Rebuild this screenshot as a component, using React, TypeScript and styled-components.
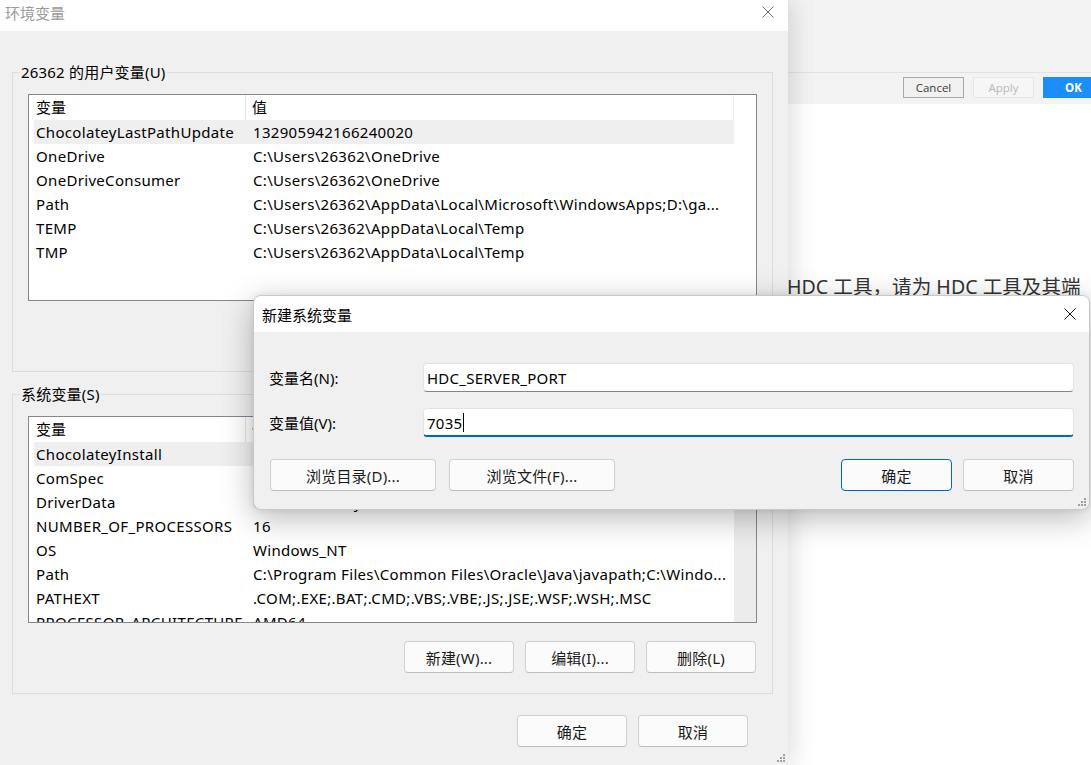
import React from 'react'
import styled, { createGlobalStyle } from 'styled-components'

const GlobalStyle = createGlobalStyle`
  html, body {
    margin: 0;
    padding: 0;
  }
  body {
    font-family: "Noto Sans", "Noto Sans CJK SC", sans-serif;
    background: #ffffff;
    color: #000;
  }
  * {
    box-sizing: border-box;
  }
`

type Pair = [string, string]

const userVars: Pair[] = [
  ['ChocolateyLastPathUpdate', '132905942166240020'],
  ['OneDrive', 'C:\\Users\\26362\\OneDrive'],
  ['OneDriveConsumer', 'C:\\Users\\26362\\OneDrive'],
  ['Path', 'C:\\Users\\26362\\AppData\\Local\\Microsoft\\WindowsApps;D:\\ga...'],
  ['TEMP', 'C:\\Users\\26362\\AppData\\Local\\Temp'],
  ['TMP', 'C:\\Users\\26362\\AppData\\Local\\Temp'],
]

const systemVars: Pair[] = [
  ['ChocolateyInstall', 'C:\\ProgramData\\chocolatey'],
  ['ComSpec', 'C:\\Windows\\system32\\cmd.exe'],
  ['DriverData', 'C:\\Windows\\System32\\Drivers\\DriverData'],
  ['NUMBER_OF_PROCESSORS', '16'],
  ['OS', 'Windows_NT'],
  ['Path', 'C:\\Program Files\\Common Files\\Oracle\\Java\\javapath;C:\\Windo...'],
  ['PATHEXT', '.COM;.EXE;.BAT;.CMD;.VBS;.VBE;.JS;.JSE;.WSF;.WSH;.MSC'],
  ['PROCESSOR_ARCHITECTURE', 'AMD64'],
]

function CloseIcon({ color = '#1a1a1a' }: { color?: string }) {
  return (
    <svg width='12' height='12' viewBox='0 0 12 12'>
      <path d='M0.5 0.5 L11.5 11.5 M11.5 0.5 L0.5 11.5' stroke={color} strokeWidth='1' fill='none' />
    </svg>
  )
}

function Grip() {
  return (
    <GripBox width='10' height='10' viewBox='0 0 10 10'>
      {[
        [8, 2],
        [5, 5],
        [8, 5],
        [2, 8],
        [5, 8],
        [8, 8],
      ].map(([x, y]) => (
        <rect key={`${x}-${y}`} x={x - 1} y={y - 1} width='2' height='2' fill='#a0a0a0' />
      ))}
    </GripBox>
  )
}

function VarList({ rows, scroll }: { rows: Pair[]; scroll?: boolean }) {
  return (
    <ListBox>
      <ListScroll>
        <ListHeader>
          <HeadCell>变量</HeadCell>
          <HeadCell $value>值</HeadCell>
        </ListHeader>
        {rows.map(([name, value], i) => (
          <Row key={name + i} $selected={i === 0}>
            <Cell>{name}</Cell>
            <Cell $value>{value}</Cell>
          </Row>
        ))}
      </ListScroll>
      <ScrollTrack $visible={scroll} />
    </ListBox>
  )
}

export default function App() {
  return (
    <Desktop>
      <GlobalStyle />
      <EnvWindow>
        <TitleBar>
          <WindowTitle>环境变量</WindowTitle>
          <CloseIcon color='#6b6b6b' />
        </TitleBar>
        <EnvBody>
          <Group>
            <Legend>26362 的用户变量(U)</Legend>
            <VarList rows={userVars} />
            <ButtonRow>
              <WinButton>新建(N)...</WinButton>
              <WinButton>编辑(E)...</WinButton>
              <WinButton>删除(D)</WinButton>
            </ButtonRow>
          </Group>
          <Group $second>
            <Legend>系统变量(S)</Legend>
            <VarList rows={systemVars} scroll />
            <ButtonRow>
              <WinButton>新建(W)...</WinButton>
              <WinButton>编辑(I)...</WinButton>
              <WinButton>删除(L)</WinButton>
            </ButtonRow>
          </Group>
          <FooterRow>
            <WinButton>确定</WinButton>
            <WinButton>取消</WinButton>
          </FooterRow>
        </EnvBody>
        <Grip />
      </EnvWindow>

      <BackWindow>
        <BackTop />
        <BackBar>
          <BarButton>Cancel</BarButton>
          <BarButton $variant='disabled'>Apply</BarButton>
          <BarButton $variant='primary'>OK</BarButton>
        </BackBar>
        <BackContent>
          <BackText>HDC 工具，请为 HDC 工具及其端口号配置环境变量。</BackText>
        </BackContent>
      </BackWindow>

      <Dialog>
        <DialogTitleBar>
          <DialogTitle>新建系统变量</DialogTitle>
          <CloseIcon />
        </DialogTitleBar>
        <DialogBody>
          <FormGrid>
            <FieldLabel>变量名(N):</FieldLabel>
            <Field>HDC_SERVER_PORT</Field>
            <FieldLabel>变量值(V):</FieldLabel>
            <Field $focused>
              7035
              <Caret />
            </Field>
          </FormGrid>
          <DialogButtons>
            <ButtonGroup $gap={13}>
              <WinButton $w={166}>浏览目录(D)...</WinButton>
              <WinButton $w={166}>浏览文件(F)...</WinButton>
            </ButtonGroup>
            <ButtonGroup $gap={11}>
              <WinButton $w={111} $primary>
                确定
              </WinButton>
              <WinButton $w={111}>取消</WinButton>
            </ButtonGroup>
          </DialogButtons>
        </DialogBody>
        <Grip />
      </Dialog>
    </Desktop>
  )
}

const Desktop = styled.div`
  position: relative;
  display: flex;
  width: 1091px;
  height: 765px;
  overflow: hidden;
  background: #ffffff;
`

const EnvWindow = styled.div`
  position: relative;
  z-index: 1;
  flex: 0 0 788px;
  display: flex;
  flex-direction: column;
  background: #f0f0f0;
  box-shadow: 2px 0 26px rgba(0, 0, 0, 0.16);
`

const TitleBar = styled.div`
  height: 31px;
  flex: 0 0 31px;
  display: flex;
  align-items: flex-start;
  justify-content: space-between;
  padding: 3px 14px 0 5px;
  background: #ffffff;

  svg {
    margin-top: 3px;
  }
`

const WindowTitle = styled.span`
  font-size: 15px;
  line-height: 20px;
  color: #9a9a9a;
`

const EnvBody = styled.div`
  display: flex;
  flex-direction: column;
  padding: 0 15px 0 12px;
`

const Group = styled.fieldset<{ $second?: boolean }>`
  margin: ${(p) => (p.$second ? '12px' : '31px')} 0 0;
  padding: 12px 15px 20px 15px;
  border: 1px solid #dcdcdc;
  min-width: 0;
`

const Legend = styled.legend`
  margin-left: -8px;
  padding: 0 1px;
  font-size: 15px;
  line-height: 20px;
  letter-spacing: 0.2px;
  color: #000;
`

const ListBox = styled.div`
  display: flex;
  height: 207px;
  border: 1px solid #828790;
  background: #ffffff;
  overflow: hidden;
`

const ListScroll = styled.div`
  flex: 1;
  min-width: 0;
  padding-left: 5px;
  overflow: hidden;
`

const ListHeader = styled.div`
  display: grid;
  grid-template-columns: 212px 1fr;
  height: 25px;
`

const HeadCell = styled.div<{ $value?: boolean }>`
  font-size: 15px;
  line-height: 25px;
  padding-left: ${(p) => (p.$value ? '6px' : '2px')};
  border-right: 1px solid ${(p) => (p.$value ? '#ececec' : '#e5e5e5')};
  white-space: nowrap;
`

const Row = styled.div<{ $selected?: boolean }>`
  display: grid;
  grid-template-columns: 212px 1fr;
  height: 24px;
  background: ${(p) => (p.$selected ? '#efefef' : 'transparent')};
`

const Cell = styled.div<{ $value?: boolean }>`
  font-size: 15px;
  line-height: 24px;
  letter-spacing: 0.32px;
  padding-left: ${(p) => (p.$value ? '7px' : '2px')};
  white-space: nowrap;
  overflow: hidden;
`

const ScrollTrack = styled.div<{ $visible?: boolean }>`
  flex: 0 0 22px;
  background: ${(p) => (p.$visible ? '#ececec' : '#ffffff')};
`

const ButtonRow = styled.div`
  display: flex;
  justify-content: flex-end;
  gap: 11px;
  margin-top: 18px;
  padding-right: 1px;
`

const FooterRow = styled.div`
  display: flex;
  justify-content: flex-end;
  gap: 11px;
  margin-top: 21px;
  padding-right: 25px;
`

const WinButton = styled.button<{ $w?: number; $primary?: boolean }>`
  width: ${(p) => p.$w ?? 110}px;
  height: 32px;
  padding: 0;
  border: 1px solid ${(p) => (p.$primary ? '#0067c0' : '#d0d0d0')};
  border-bottom-color: ${(p) => (p.$primary ? '#0067c0' : '#bdbdbd')};
  border-radius: 4px;
  background: #fbfbfb;
  font-family: inherit;
  font-size: 15px;
  letter-spacing: 0.2px;
  color: #1a1a1a;
`

const GripBox = styled.svg`
  position: absolute;
  right: 2px;
  bottom: 2px;
`

const BackWindow = styled.div`
  flex: 0 0 330px;
  display: flex;
  flex-direction: column;
  background: #ffffff;
`

const BackTop = styled.div`
  height: 73px;
  background: #f3f3f3;
  border-bottom: 1px solid #e2e2e2;
`

const BackBar = styled.div`
  height: 31px;
  display: flex;
  align-items: center;
  gap: 9px;
  padding: 0 0 2px 115px;
  background: #f3f3f3;
`

const BarButton = styled.div<{ $variant?: 'default' | 'disabled' | 'primary' }>`
  flex: 0 0 61px;
  height: 21px;
  display: flex;
  align-items: center;
  justify-content: center;
  font-family: "Open Sans", sans-serif;
  font-size: 11.5px;
  font-weight: ${(p) => (p.$variant === 'primary' ? 700 : 400)};
  color: ${(p) => (p.$variant === 'primary' ? '#ffffff' : p.$variant === 'disabled' ? '#b8b8b8' : '#3a3a3a')};
  background: ${(p) => (p.$variant === 'primary' ? '#1c8ef9' : p.$variant === 'disabled' ? '#f6f6f6' : '#f1f1f1')};
  border: 1px solid
    ${(p) => (p.$variant === 'primary' ? '#1c8ef9' : p.$variant === 'disabled' ? '#e6e6e6' : '#a9a9a9')};
`

const BackContent = styled.div`
  padding-top: 169px;
`

const BackText = styled.p`
  width: 300px;
  margin: 0 0 0 -1px;
  font-size: 19.6px;
  line-height: 28px;
  color: #333333;
`

const Dialog = styled.div`
  position: absolute;
  z-index: 2;
  left: 253px;
  top: 295px;
  width: 837px;
  height: 215px;
  display: flex;
  flex-direction: column;
  background: #f0f0f0;
  border: 1px solid #c8c8c8;
  border-radius: 8px;
  overflow: hidden;
  box-shadow: 0 8px 32px rgba(0, 0, 0, 0.28), 0 0 6px rgba(0, 0, 0, 0.08);
`

const DialogTitleBar = styled.div`
  height: 36px;
  flex: 0 0 36px;
  display: flex;
  align-items: center;
  justify-content: space-between;
  padding: 0 13px 0 8px;
  background: #ffffff;
`

const DialogTitle = styled.span`
  font-size: 15px;
  color: #000;
`

const DialogBody = styled.div`
  padding: 31px 15px 0 15px;
`

const FormGrid = styled.div`
  display: grid;
  grid-template-columns: 154px 1fr;
  row-gap: 16px;
  align-items: center;
`

const FieldLabel = styled.div`
  font-size: 15px;
  color: #000;
`

const Field = styled.div<{ $focused?: boolean }>`
  display: flex;
  align-items: center;
  height: 29px;
  padding: ${(p) => (p.$focused ? '1px' : '0')} 3px 0;
  background: #ffffff;
  border: 1px solid #e3e3e3;
  border-bottom: ${(p) => (p.$focused ? '2px solid #0067c0' : '1px solid #868686')};
  border-radius: 4px;
  font-size: 15px;
  letter-spacing: 0.25px;
  color: #000;
`

const Caret = styled.span`
  width: 1px;
  height: 19px;
  margin-left: 1px;
  background: #000;
`

const DialogButtons = styled.div`
  display: flex;
  justify-content: space-between;
  margin: 22px 0 0 1px;
`

const ButtonGroup = styled.div<{ $gap: number }>`
  display: flex;
  gap: ${(p) => p.$gap}px;
`
